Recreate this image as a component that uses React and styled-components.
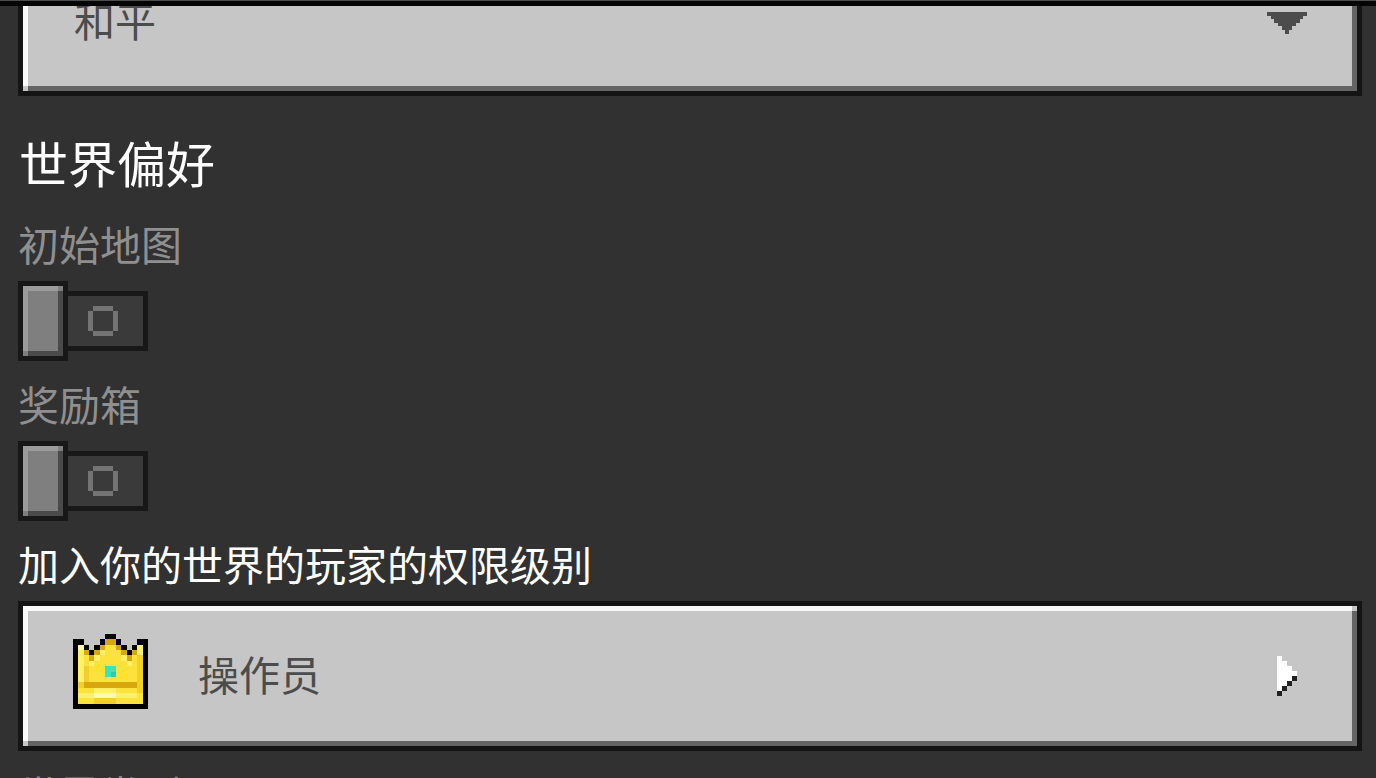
import React from "react";
import styled, { createGlobalStyle } from "styled-components";

const GlobalStyle = createGlobalStyle`
    * {
        box-sizing: border-box;
    }

    body {
        margin: 0;
        background-color: #313131;
        font-family: "Noto Sans CJK SC", "Noto Sans", sans-serif;
    }
`;

const Screen = styled.div`
    display: flex;
    flex-direction: column;
    height: 100vh;
    overflow: hidden;
    background-color: #313131;
`;

const TopBar = styled.header`
    flex: none;
    height: 6px;
    background-color: #050505;
    border-top: 1px solid #4c4f4e;
`;

const ScrollArea = styled.main`
    flex: 1;
    min-height: 0;
    overflow: hidden;
    padding: 0 14px 0 18px;
`;

/* the list is scrolled down a little */
const OptionList = styled.form`
    display: flex;
    flex-direction: column;
    margin-top: -60px;
`;

const Heading = styled.h2`
    margin: 36px 0 29px;
    color: #ffffff;
    font-size: 49px;
    font-weight: 400;
    line-height: 60px;
    padding-left: 1px;
`;

const Option = styled.div`
    display: flex;
    flex-direction: column;
    align-items: flex-start;
    height: ${(props) => (props.$tall ? "230px" : "160px")};
`;

const OptionLabel = styled.label`
    color: ${(props) => (props.$disabled ? "#8f8f8f" : "#ffffff")};
    font-size: 41px;
    line-height: 44px;
    height: 60px;
    white-space: nowrap;
`;

const bevel = `
    border: 5px solid #141414;
    background-color: #c6c6c6;
    background-image:
        linear-gradient(#c6c6c6, #c6c6c6),
        linear-gradient(#c6c6c6, #c6c6c6),
        linear-gradient(#f9f9f9, #f9f9f9),
        linear-gradient(#f9f9f9, #f9f9f9),
        linear-gradient(#646464, #646464),
        linear-gradient(#646464, #646464);
    background-position: right top, left bottom, left top, left top, right top, left bottom;
    background-size: 5px 5px, 5px 5px, 100% 5px, 5px 100%, 5px 100%, 100% 5px;
    background-repeat: no-repeat;
    background-origin: padding-box;
`;

const SelectBox = styled.div`
    display: grid;
    grid-template-columns: 1fr 40px 55px;
    align-items: center;
`;

const Select = styled.select`
    ${bevel}
    grid-area: 1 / 1 / 2 / 4;
    appearance: none;
    width: 100%;
    height: 150px;
    margin: 0;
    padding: 0 100px 4px 51px;
    border-radius: 0;
    color: #4c4c4c;
    font-family: inherit;
    font-size: 41px;
`;

const SelectArrow = styled.svg`
    grid-area: 1 / 2 / 2 / 3;
    z-index: 1;
    margin-top: 4px;
    pointer-events: none;
`;

const LinkButton = styled.button`
    ${bevel}
    display: flex;
    align-items: center;
    width: 100%;
    height: 150px;
    padding: 0 60px 0 50px;
    border-radius: 0;
    color: #4c4c4c;
    font-family: inherit;
    font-size: 41px;
    text-align: left;
`;

const Crown = styled.svg`
    margin-bottom: 10px;
`;

const ButtonText = styled.span`
    flex: 1;
    padding: 0 0 6px 50px;
`;

const ToggleBox = styled.span`
    position: relative;
    display: flex;
    align-items: center;
    height: 80px;
`;

const ToggleInput = styled.input`
    position: absolute;
    inset: 0;
    width: 100%;
    height: 100%;
    margin: 0;
    opacity: 0;
`;

const Knob = styled.span`
    width: 50px;
    height: 80px;
    border: 5px solid #181818;
    background-color: #7f7f7f;
    background-image:
        linear-gradient(#7f7f7f, #7f7f7f),
        linear-gradient(#7f7f7f, #7f7f7f),
        linear-gradient(#9c9c9c, #9c9c9c),
        linear-gradient(#9c9c9c, #9c9c9c),
        linear-gradient(#4a4a4a, #4a4a4a),
        linear-gradient(#4a4a4a, #4a4a4a);
    background-position: right top, left bottom, left top, left top, right top, left bottom;
    background-size: 5px 5px, 5px 5px, 100% 5px, 5px 100%, 5px 100%, 100% 5px;
    background-repeat: no-repeat;
    background-origin: padding-box;
`;

const Track = styled.span`
    display: flex;
    align-items: center;
    width: 80px;
    height: 60px;
    padding-left: 20px;
    border: 5px solid #181818;
    border-left: none;
    background-color: #3a3a3a;
`;

const crownColors = {
  K: "#000000",
  d: "#d8a70d",
  o: "#f3cf2b",
  y: "#fde23c",
  l: "#fff06c",
  w: "#fff9b0",
  t: "#3fe0c0",
  T: "#2fc9ac",
};

const crownRows = [
  "......KK......",
  "KK...KddK...KK",
  "KwK.KdyydK.KlK",
  "KldKdlyyydKdlK",
  "KlydlyyyyldyoK",
  "KlylyyyyyylyoK",
  "KloyyyttyyyyoK",
  "KloyyytTyyyyoK",
  "KloyyyyyyyyyoK",
  "KoddddddddddoK",
  "KyyyllllyyyyoK",
  "KlllwwwwllllyK",
  "KyyyooooyyyyyK",
  "KKKKKKKKKKKKKK",
];

const CrownIcon = () => (
  <Crown width="75" height="75" viewBox="0 0 14 14" shapeRendering="crispEdges" aria-hidden="true">
    {crownRows.map((row, y) =>
      row.split("").map((c, x) =>
        c === "." ? null : (
          <rect key={`${x}-${y}`} x={x} y={y} width="1" height="1" fill={crownColors[c]} />
        )
      )
    )}
  </Crown>
);

const NextIcon = () => (
  <svg width="20" height="40" viewBox="0 0 4 8" shapeRendering="crispEdges" aria-hidden="true">
    <path d="M0 0h1v1h1v1h1v1h1v1H3v1H2v1H1v1H0z" fill="#ffffff" />
    <path d="M3 4h1v1H3zM2 5h1v1H2zM1 6h1v1H1zM0 7h1v1H0z" fill="#212121" />
  </svg>
);

const OffIcon = () => (
  <svg width="30" height="30" viewBox="0 0 6 6" shapeRendering="crispEdges" aria-hidden="true">
    <path d="M1 0h4v1H1zM0 1h1v4H0zM5 1h1v4H5zM1 5h4v1H1z" fill="#747474" />
  </svg>
);

const Toggle = ({ id }) => (
  <ToggleBox>
    <ToggleInput type="checkbox" id={id} disabled />
    <Knob />
    <Track>
      <OffIcon />
    </Track>
  </ToggleBox>
);

const App = () => {
  return (
    <Screen>
      <GlobalStyle />
      <TopBar />
      <ScrollArea>
        <OptionList>
          <SelectBox>
            <Select aria-label="难度" defaultValue="peaceful">
              <option value="peaceful">和平</option>
            </Select>
            <SelectArrow width="40" height="22" viewBox="0 0 40 22" shapeRendering="crispEdges" aria-hidden="true">
              <path
                d="M0 0H40V4H36V7H33V11H29V14H25V18H22V22H18V18H15V14H11V11H7V7H4V4H0z"
                fill="#4c4c4c"
              />
            </SelectArrow>
          </SelectBox>
          <Heading>世界偏好</Heading>
          <Option>
            <OptionLabel htmlFor="start-map" $disabled>初始地图</OptionLabel>
            <Toggle id="start-map" />
          </Option>
          <Option>
            <OptionLabel htmlFor="bonus-chest" $disabled>奖励箱</OptionLabel>
            <Toggle id="bonus-chest" />
          </Option>
          <Option $tall>
            <OptionLabel htmlFor="permission">加入你的世界的玩家的权限级别</OptionLabel>
            <LinkButton type="button" id="permission">
              <CrownIcon />
              <ButtonText>操作员</ButtonText>
              <NextIcon />
            </LinkButton>
          </Option>
          <OptionLabel as="div" $disabled>世界类型</OptionLabel>
        </OptionList>
      </ScrollArea>
    </Screen>
  );
};

export default App;
